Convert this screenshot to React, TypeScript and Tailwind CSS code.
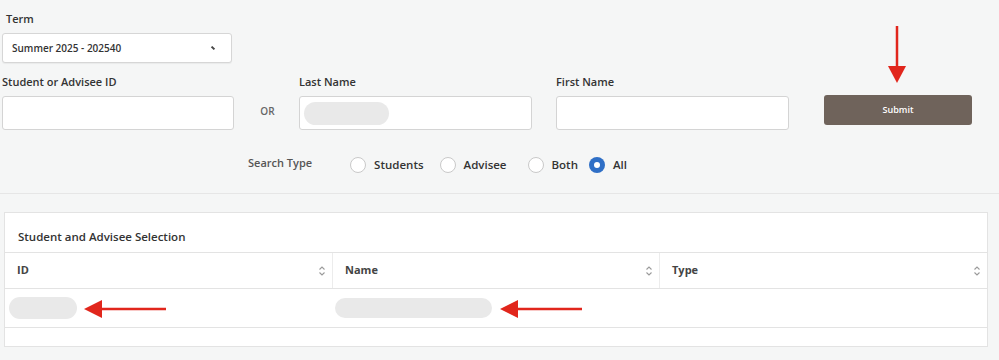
import type { ReactNode } from 'react'

const font = { fontFamily: '"Open Sans", "Liberation Sans", sans-serif' }

function Label({ children }: { children: ReactNode }) {
  return <div className="text-[11px] font-semibold text-[#333] leading-[14px]">{children}</div>
}

function Radio({ label, checked }: { label: string; checked?: boolean }) {
  return (
    <div className="flex items-center gap-[8px]">
      {checked ? (
        <span className="w-[16px] h-[16px] rounded-full bg-[#2f6fc6] flex items-center justify-center">
          <span className="w-[6px] h-[6px] rounded-full bg-white" />
        </span>
      ) : (
        <span className="w-[16px] h-[16px] rounded-full bg-white border border-[#c9c9c9]" />
      )}
      <span className="text-[11.5px] font-semibold text-[#333]">{label}</span>
    </div>
  )
}

function SortIcon() {
  return (
    <svg width="8" height="12" viewBox="0 0 8 12" fill="none" stroke="#9a9a9a" strokeWidth="1.1">
      <path d="M1.5 4.5 L4 2 L6.5 4.5" />
      <path d="M1.5 7.5 L4 10 L6.5 7.5" />
    </svg>
  )
}

function Arrow({ dir }: { dir: 'down' | 'left' }) {
  if (dir === 'down')
    return (
      <svg width="20" height="58" viewBox="0 0 20 58">
        <line x1="10" y1="0" x2="10" y2="44" stroke="#e1261c" strokeWidth="2.5" />
        <polygon points="1,40 19,40 10,57" fill="#e1261c" />
      </svg>
    )
  return (
    <svg width="82" height="20" viewBox="0 0 82 20">
      <line x1="14" y1="10" x2="82" y2="10" stroke="#e1261c" strokeWidth="2.5" />
      <polygon points="0,10 18,1 18,19" fill="#e1261c" />
    </svg>
  )
}

export default function App() {
  return (
    <div className="w-[999px] h-[360px] bg-[#f5f6f6] relative overflow-hidden" style={font}>
      {/* Search form */}
      <div className="h-[194px] border-b border-[#e6e6e6] pl-[2px] pt-[12px]">
        <div className="pl-[4px]">
          <Label>Term</Label>
        </div>
        <div className="mt-[7px] w-[230px] h-[30px] bg-white border border-[#d6d6d6] rounded-[3px] flex items-center justify-between pl-[9px] pr-[16px] shadow-[0_1px_1px_rgba(0,0,0,0.05)]">
          <span className="text-[10px] font-semibold text-[#333]">Summer 2025 - 202540</span>
          <span className="w-[4px] h-[2px] bg-[#444] rotate-45" />
        </div>

        <div className="mt-[12px] flex">
          <div className="w-[232px]">
            <Label>Student or Advisee ID</Label>
            <div className="mt-[7px] h-[34px] bg-white border border-[#d4d4d4] rounded-[3px]" />
          </div>
          <div className="w-[65px] flex items-end justify-center pb-[11px]">
            <span className="text-[10px] font-semibold text-[#666] pl-[2px]">OR</span>
          </div>
          <div className="w-[233px]">
            <Label>Last Name</Label>
            <div className="mt-[7px] h-[34px] bg-white border border-[#d4d4d4] rounded-[3px] flex items-center pl-[4px]">
              <span className="w-[85px] h-[23px] rounded-full bg-[#e9e9e9]" />
            </div>
          </div>
          <div className="w-[233px] ml-[24px]">
            <Label>First Name</Label>
            <div className="mt-[7px] h-[34px] bg-white border border-[#d4d4d4] rounded-[3px]" />
          </div>
          <div className="ml-[35px] pt-[20px]">
            <button className="w-[148px] h-[30px] bg-[#6f635b] rounded-[3px] text-white text-[9px] font-semibold">
              Submit
            </button>
          </div>
        </div>

        <div className="mt-[26px] flex items-center pl-[246px]">
          <span className="text-[11px] font-semibold text-[#555] mr-[38px] -mt-[2px]">Search Type</span>
          <div className="flex items-center">
            <Radio label="Students" />
            <div className="ml-[16px]">
              <Radio label="Advisee" />
            </div>
            <div className="ml-[21px]">
              <Radio label="Both" />
            </div>
            <div className="ml-[11px]">
              <Radio label="All" checked />
            </div>
          </div>
        </div>
      </div>

      {/* Results table */}
      <div className="ml-[4px] mt-[18px] w-[984px] bg-white border border-[#e3e3e3]">
        <div className="h-[40px] flex items-end pb-[7px] pl-[13px] border-b border-[#e3e3e3]">
          <span className="text-[11.5px] font-semibold text-[#333]">Student and Advisee Selection</span>
        </div>
        <div className="grid grid-cols-[328px_327px_1fr] h-[36px] border-b border-[#e3e3e3]">
          {['ID', 'Name', 'Type'].map((h, i) => (
            <div
              key={h}
              className={`flex items-center justify-between pl-[12px] pr-[6px] ${i < 2 ? 'border-r border-[#ececec]' : ''}`}
            >
              <span className="text-[11px] font-bold text-[#444]">{h}</span>
              <SortIcon />
            </div>
          ))}
        </div>
        <div className="grid grid-cols-[328px_327px_1fr] h-[39px] border-b border-[#e3e3e3]">
          <div className="flex items-center pl-[4px]">
            <span className="w-[68px] h-[22px] rounded-full bg-[#e9e9e9]" />
          </div>
          <div className="flex items-center pl-[2px]">
            <span className="w-[157px] h-[20px] rounded-full bg-[#e9e9e9]" />
          </div>
          <div />
        </div>
        <div className="h-[18px]" />
      </div>

      {/* Annotation arrows */}
      <div className="absolute left-[887px] top-[26px]">
        <Arrow dir="down" />
      </div>
      <div className="absolute left-[84px] top-[299px]">
        <Arrow dir="left" />
      </div>
      <div className="absolute left-[500px] top-[299px]">
        <Arrow dir="left" />
      </div>
    </div>
  )
}
